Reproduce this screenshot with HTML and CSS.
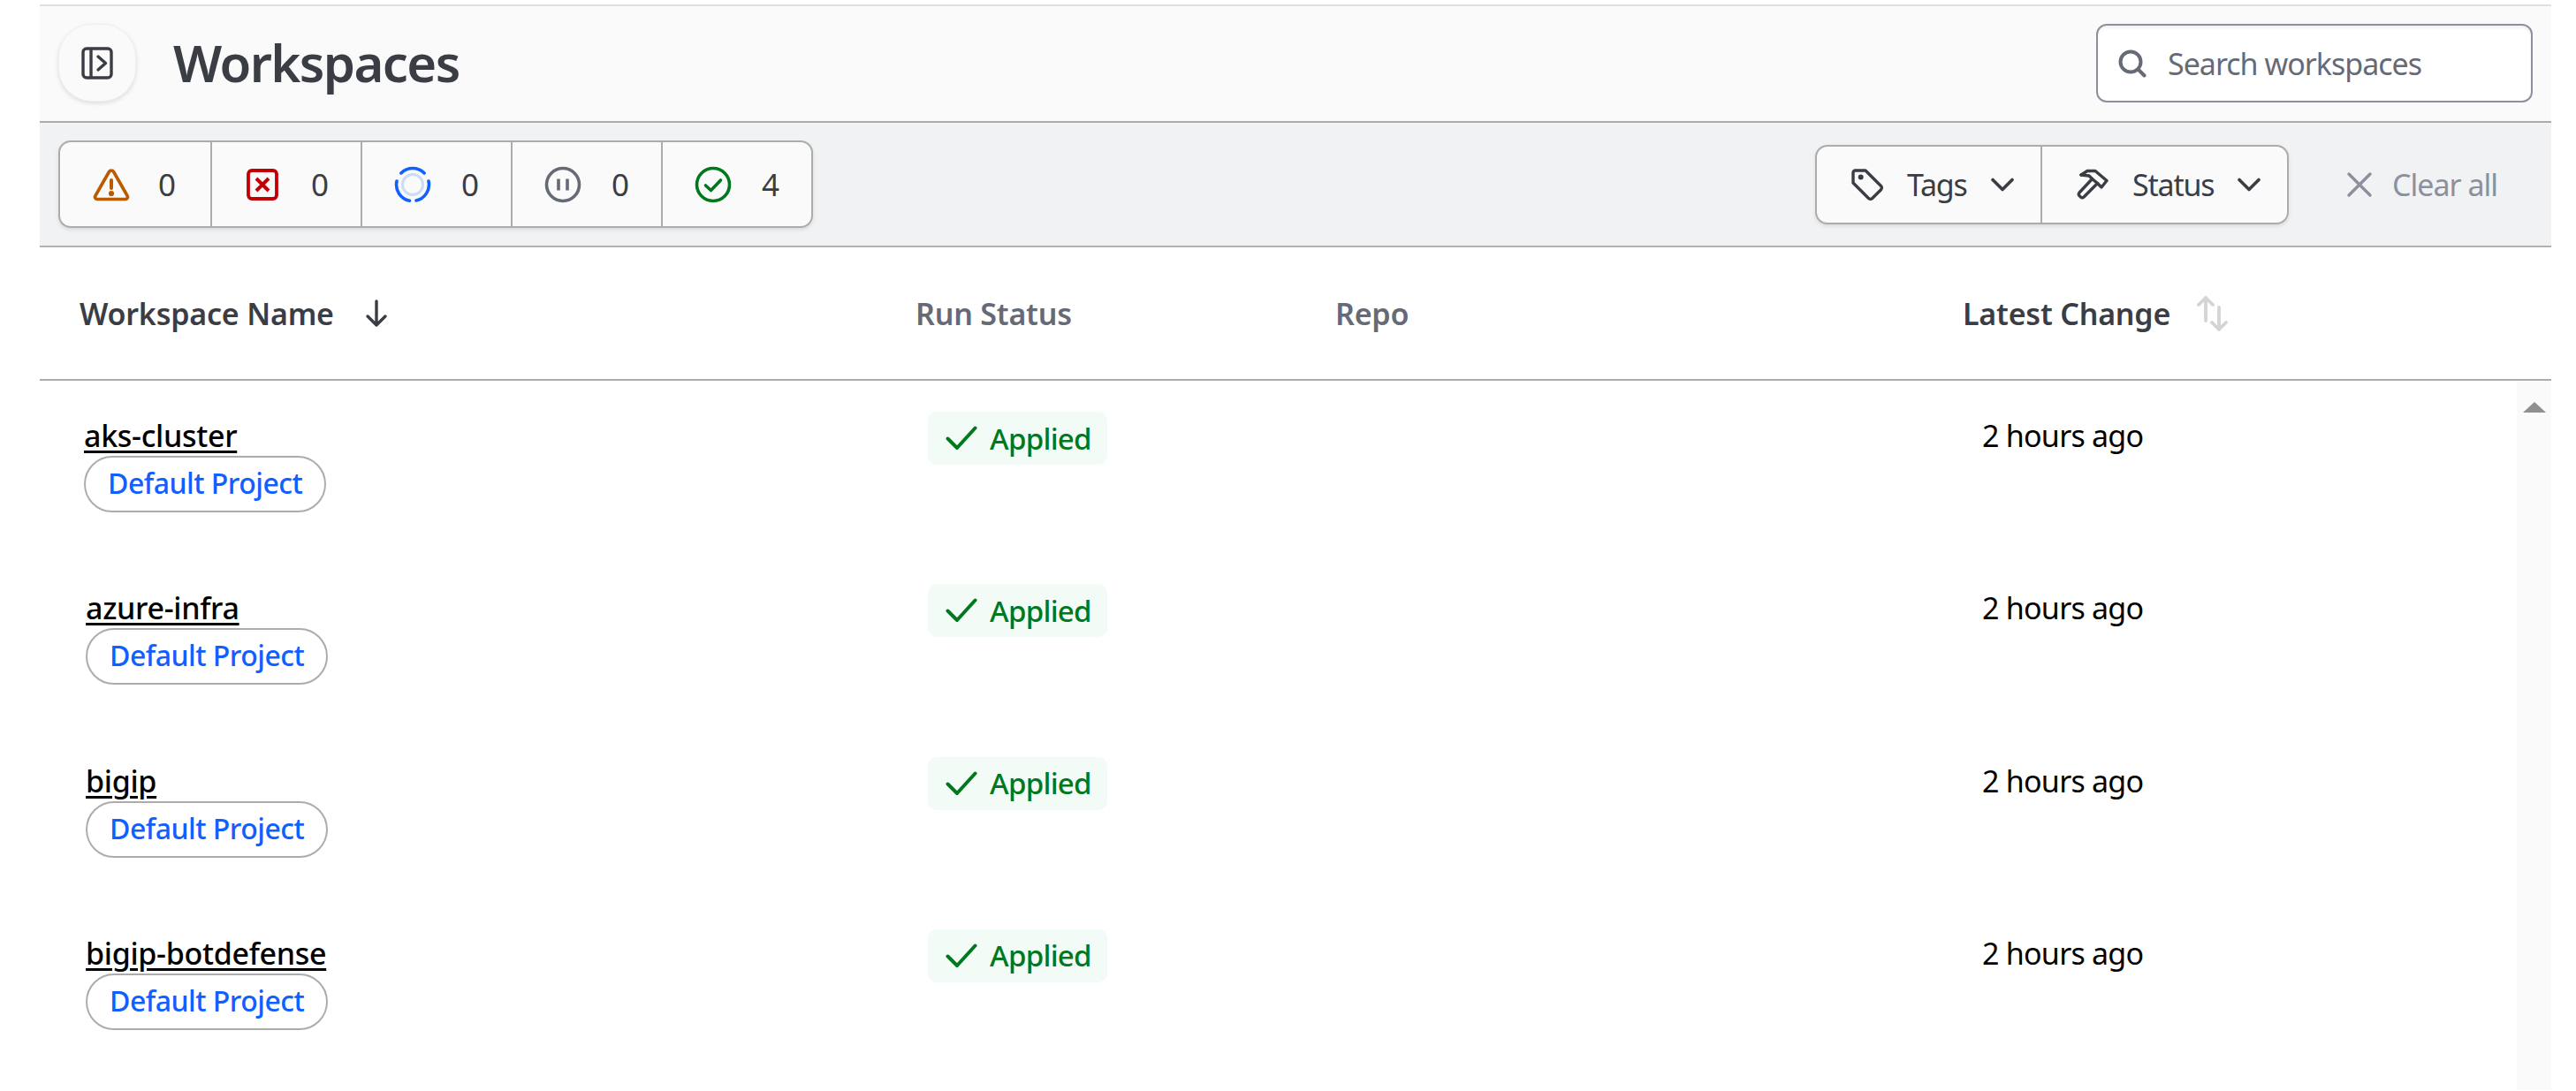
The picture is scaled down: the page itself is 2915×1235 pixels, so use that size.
FILE: index.html
```html
<!DOCTYPE html>
<html>
<head>
  <title>Workspaces</title>
  <link rel="stylesheet" href="styles.css">
</head>
<body>
  <div class="page">
    <header class="top-bar">
      <button class="nav-toggle">
        <svg width="36" height="37" viewBox="0 0 36 37" fill="none" stroke="#3b3d45" stroke-width="3.400" stroke-linejoin="round"><rect x="2" y="2" width="32" height="33" rx="4"/><path d="M11 2v33"/><path d="M19 11l8.500 7.500-8.500 7.500" stroke-linecap="round"/></svg>
      </button>
      <h1>Workspaces</h1>
      <label class="search">
        <svg width="32" height="32" viewBox="0 0 32 32" fill="none" stroke="#656a76" stroke-width="4" stroke-linecap="round"><circle cx="14" cy="14" r="11.500"/><path d="M23 23l6.500 6.500"/></svg>
        <span>Search workspaces</span>
      </label>
    </header>

    <div class="toolbar">
      <div class="counts">
        <div class="count">
          <svg width="42" height="38" viewBox="0 0 42 38" fill="none" stroke="#bb5a00" stroke-width="3.600" stroke-linejoin="round" stroke-linecap="round"><path d="M18.400 4.500a3 3 0 0 1 5.200 0L39 31.500a2.500 2.500 0 0 1-2.200 4H5.200a2.500 2.500 0 0 1-2.200-4z"/><path d="M21 14v9" stroke-width="4"/><circle cx="21" cy="29" r="1.300" fill="#bb5a00"/></svg>
          <span>0</span>
        </div>
        <div class="count">
          <svg width="42" height="36" viewBox="-3 0 42 36" fill="none" stroke="#c00005" stroke-width="3.800"><rect x="2" y="2" width="32" height="32" rx="4"/><path d="M11 11l14 14M25 11L11 25" stroke-width="4"/></svg>
          <span>0</span>
        </div>
        <div class="count">
          <svg width="42" height="42" viewBox="0 0 42 42" fill="none"><circle cx="21" cy="21" r="11.500" stroke="#ccdcf6" stroke-width="3"/><path d="M7.900 7.900A18.500 18.500 0 0 1 34.100 7.900M39 17A18.500 18.500 0 0 1 25 39M17.500 39.200A18.500 18.500 0 0 1 3 17" stroke="#1060ff" stroke-width="3.600" stroke-linecap="round"/></svg>
          <span>0</span>
        </div>
        <div class="count">
          <svg width="42" height="42" viewBox="0 0 42 42" fill="none" stroke="#656a76" stroke-width="3.600"><circle cx="21" cy="21" r="18.500"/><path d="M16 14.500v13M26 14.500v13"/></svg>
          <span>0</span>
        </div>
        <div class="count">
          <svg width="42" height="42" viewBox="0 0 42 42" fill="none" stroke="#00781e" stroke-width="3.600" stroke-linecap="round" stroke-linejoin="round"><circle cx="21" cy="21" r="18.500"/><path d="M12.500 22l6 5.500 11-11.500"/></svg>
          <span>4</span>
        </div>
      </div>

      <div class="filters">
        <div class="filter filter-tags">
          <svg width="36" height="36" viewBox="0 0 36 36" fill="none" stroke="#3b3d45" stroke-width="3.400" stroke-linejoin="round"><path d="M2 4.500a2.500 2.500 0 0 1 2.500-2.500H16L33.500 19.500a3 3 0 0 1 0 4.200L23.700 33.500a3 3 0 0 1-4.200 0L2 16z"/><circle cx="10.700" cy="9.500" r="1.300" fill="#3b3d45"/></svg>
          <span>Tags</span>
          <svg class="chev" width="26" height="16" viewBox="0 0 26 16" fill="none" stroke="#3b3d45" stroke-width="3.600" stroke-linecap="round" stroke-linejoin="round"><path d="M2 2.500L13 13.500 24 2.500"/></svg>
        </div>
        <div class="filter filter-status">
          <svg width="36" height="35" viewBox="0 0 36 35" fill="none" stroke="#3b3d45" stroke-width="3.400" stroke-linejoin="round" stroke-linecap="round"><path d="M5 7L12 2.500H21L34 13.500 28 21 23.500 16.500"/><path d="M5 7L14 8 17.500 11.500"/><path d="M17.500 11.500L3 27a2.800 2.800 0 0 0 0 3.600l1.500 1.400a2.800 2.800 0 0 0 3.600 0L23.500 16.500z"/></svg>
          <span>Status</span>
          <svg class="chev" width="26" height="16" viewBox="0 0 26 16" fill="none" stroke="#3b3d45" stroke-width="3.600" stroke-linecap="round" stroke-linejoin="round"><path d="M2 2.500L13 13.500 24 2.500"/></svg>
        </div>
      </div>

      <div class="clear-all">
        <svg width="30" height="30" viewBox="0 0 30 30" fill="none" stroke="#8c909c" stroke-width="3.400" stroke-linecap="round"><path d="M3 3l24 24M27 3L3 27"/></svg>
        <span>Clear all</span>
      </div>
    </div>

    <div class="table-head">
      <div class="col-name th">Workspace Name
        <svg class="sort" width="26" height="32" viewBox="0 0 26 32" fill="none" stroke="#3b3d45" stroke-width="3.400" stroke-linecap="round" stroke-linejoin="round"><path d="M13 2v27M3 19l10 10 10-10"/></svg>
      </div>
      <div class="col-status th muted">Run Status</div>
      <div class="col-repo th muted">Repo</div>
      <div class="col-change th">Latest Change
        <svg class="sort-both" width="36" height="42" viewBox="0 0 36 42" fill="none" stroke="#d4d4d6" stroke-width="3.800" stroke-linecap="round" stroke-linejoin="round"><path d="M11 29V3M3 11l8-8 8 8M26 14v25M18 31l8 8 8-8"/></svg>
      </div>
    </div>

    <div class="table-body">
      <div class="rows">
        <div class="row row-first">
          <div class="col-name">
            <a class="ws-link">aks-cluster</a>
            <span class="project">Default Project</span>
          </div>
          <div class="col-status">
            <span class="applied"><svg width="36" height="30" viewBox="0 0 36 30" fill="none" stroke="#00781e" stroke-width="4" stroke-linecap="round" stroke-linejoin="round"><path d="M2.500 15.500L13 26 33.500 3.500"/></svg>Applied</span>
          </div>
          <div class="col-repo"></div>
          <div class="col-change changed">2 hours ago</div>
        </div>
        <div class="row">
          <div class="col-name">
            <a class="ws-link">azure-infra</a>
            <span class="project">Default Project</span>
          </div>
          <div class="col-status">
            <span class="applied"><svg width="36" height="30" viewBox="0 0 36 30" fill="none" stroke="#00781e" stroke-width="4" stroke-linecap="round" stroke-linejoin="round"><path d="M2.500 15.500L13 26 33.500 3.500"/></svg>Applied</span>
          </div>
          <div class="col-repo"></div>
          <div class="col-change changed">2 hours ago</div>
        </div>
        <div class="row">
          <div class="col-name">
            <a class="ws-link">bigip</a>
            <span class="project">Default Project</span>
          </div>
          <div class="col-status">
            <span class="applied"><svg width="36" height="30" viewBox="0 0 36 30" fill="none" stroke="#00781e" stroke-width="4" stroke-linecap="round" stroke-linejoin="round"><path d="M2.500 15.500L13 26 33.500 3.500"/></svg>Applied</span>
          </div>
          <div class="col-repo"></div>
          <div class="col-change changed">2 hours ago</div>
        </div>
        <div class="row">
          <div class="col-name">
            <a class="ws-link">bigip-botdefense</a>
            <span class="project">Default Project</span>
          </div>
          <div class="col-status">
            <span class="applied"><svg width="36" height="30" viewBox="0 0 36 30" fill="none" stroke="#00781e" stroke-width="4" stroke-linecap="round" stroke-linejoin="round"><path d="M2.500 15.500L13 26 33.500 3.500"/></svg>Applied</span>
          </div>
          <div class="col-repo"></div>
          <div class="col-change changed">2 hours ago</div>
        </div>
      </div>
      <div class="scrollbar">
        <div class="scroll-up"></div>
      </div>
    </div>
  </div>
</body>
</html>
```

FILE: styles.css
```css
* {
    box-sizing: border-box;
}

body {
    margin: 0;
    background: #fff;
    font-family: "Noto Sans", "Open Sans", sans-serif;
    color: #3b3d45;
    overflow: hidden;
}

.page {
    height: 1235px;
    margin: 0 28px 0 45px;
    padding-top: 5px;
}

/* top bar */
.top-bar {
    height: 134px;
    display: flex;
    align-items: center;
    padding: 0 21px;
    background: #fafafa;
    border-top: 2px solid #e0e0e0;
    border-bottom: 2px solid #acacac;
}

.nav-toggle {
    width: 88px;
    height: 88px;
    display: flex;
    align-items: center;
    justify-content: center;
    margin-top: -2px;
    padding: 0;
    background: #fafafa;
    border: 1px solid #f0f0f0;
    border-radius: 38px;
    box-shadow: 0 2px 5px rgba(0, 0, 0, 0.12);
}

h1 {
    margin: -2px 0 0 42px;
    font-size: 58px;
    font-weight: 600;
    line-height: 1;
    letter-spacing: -1.6px;
}

.search {
    width: 494px;
    height: 89px;
    display: flex;
    align-items: center;
    gap: 24px;
    margin-left: auto;
    margin-top: -2px;
    padding: 2px 0 0 23px;
    background: #fff;
    border: 2px solid #8c909c;
    border-radius: 12px;
    box-shadow: inset 0 3px 3px rgba(0, 0, 0, 0.05);
    font-size: 34px;
    letter-spacing: -1px;
    color: #656a76;
}

/* counters and filters */
.toolbar {
    height: 141px;
    display: flex;
    align-items: center;
    padding: 0 0 0 21px;
    background: #f1f2f3;
    border-bottom: 2px solid #b0b0b0;
}

.counts {
    display: flex;
    height: 99px;
    background: #fafafa;
    border: 2px solid #acacac;
    border-radius: 14px;
    box-shadow: 0 2px 4px rgba(0, 0, 0, 0.1);
}

.count {
    width: 170px;
    display: flex;
    align-items: center;
    gap: 34px;
    padding-left: 36px;
    font-size: 35px;
    border-left: 2px solid #acacac;
}

.count:first-child {
    border-left: 0;
    gap: 32px;
    padding-left: 37px;
}

.filters {
    display: flex;
    height: 90px;
    margin-left: auto;
    background: #fafafa;
    border: 2px solid #acacac;
    border-radius: 14px;
    box-shadow: 0 2px 4px rgba(0, 0, 0, 0.1);
}

.filter {
    display: flex;
    align-items: center;
    font-size: 34px;
    letter-spacing: -1.2px;
}

.filter-tags {
    width: 253px;
    padding-left: 39px;
}

.filter-status {
    width: 279px;
    padding-left: 39px;
    border-left: 2px solid #acacac;
}

.filter span {
    margin-left: 27px;
}

.filter .chev {
    margin-left: 27px;
}

.clear-all {
    display: flex;
    align-items: center;
    gap: 22px;
    width: 297px;
    padding-left: 65px;
    font-size: 34px;
    letter-spacing: -1px;
    color: #8c909c;
}

/* table */
.table-head {
    height: 151px;
    display: flex;
    align-items: center;
    border-bottom: 2px solid #acacac;
}

.th {
    display: flex;
    align-items: center;
    font-size: 34px;
    font-weight: 600;
    letter-spacing: -0.2px;
}

.muted {
    color: #656a76;
}

.col-name {
    width: 991px;
    padding-left: 45px;
}

.col-status {
    width: 475px;
}

.col-repo {
    width: 710px;
}

.col-change {
    flex: 1;
}

.sort {
    margin-left: 35px;
}

.sort-both {
    margin-left: 29px;
}

.table-body {
    display: flex;
    height: 803px;
}

.rows {
    flex: 1;
}

.row {
    height: 195.3px;
    display: flex;
    padding-top: 39px;
}

.row .col-name {
    padding-left: 52px;
}

.row-first .col-name {
    padding-left: 50px;
}

.ws-link {
    display: table;
    font-size: 34px;
    font-weight: 500;
    letter-spacing: -0.3px;
    line-height: 46px;
    color: #000;
    text-decoration: underline;
    text-decoration-thickness: 3px;
    text-underline-offset: 4px;
}

.project {
    display: inline-block;
    height: 64px;
    padding: 0 25px;
    font-size: 32px;
    font-weight: 500;
    letter-spacing: -0.5px;
    line-height: 57px;
    color: #1060ff;
    border: 2px solid #acacac;
    border-radius: 33px;
}

.row .col-status {
    padding-left: 14px;
}

.applied {
    display: inline-flex;
    align-items: center;
    height: 60px;
    margin-top: -4px;
    padding: 0 18px 0 20px;
    gap: 14px;
    font-size: 33px;
    font-weight: 500;
    letter-spacing: -0.7px;
    color: #00781e;
    background: #f2fbf5;
    border-radius: 10px;
}

.row .col-change {
    padding-left: 22px;
}

.changed {
    font-size: 34px;
    letter-spacing: -0.75px;
    line-height: 46px;
    color: #000;
}

.scrollbar {
    width: 39px;
    background: #fafafa;
    padding: 24px 0 0 7px;
}

.scroll-up {
    width: 0;
    height: 0;
    border-left: 13px solid transparent;
    border-right: 13px solid transparent;
    border-bottom: 12px solid #8f8f8f;
}
```
